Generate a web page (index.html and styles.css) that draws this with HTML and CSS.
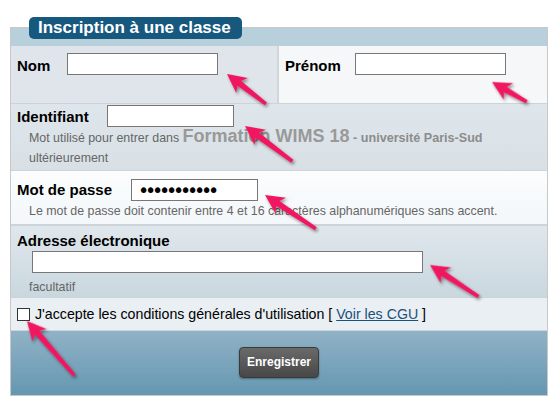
FILE: index.html
```html
<!DOCTYPE html>
<html lang="fr">
<head>
<meta charset="utf-8">
<title>Inscription à une classe</title>
<link rel="stylesheet" href="styles.css">
</head>
<body>
<div class="page">
  <form class="panel">
    <div class="legend">Inscription à une classe</div>
    <div class="strip"></div>

    <div class="row names">
      <div class="cell cell-nom">
        <label class="lab lab-nom">Nom</label>
        <input class="field field-short" type="text">
      </div>
      <div class="cell cell-prenom">
        <label class="lab lab-prenom">Prénom</label>
        <input class="field field-short" type="text">
      </div>
    </div>

    <div class="row ident">
      <div class="line">
        <label class="lab lab-ident">Identifiant</label>
        <input class="field field-mid" type="text">
      </div>
      <div class="help help-ident">Mot utilisé pour entrer dans <span class="site">Formation WIMS 18</span> <span class="univ">- université Paris-Sud</span><br>ultérieurement</div>
    </div>

    <div class="row pass">
      <div class="line">
        <label class="lab lab-pass">Mot de passe</label>
        <input class="field field-mid field-pass" type="password" value="abcdefghijk">
      </div>
      <div class="help help-pass">Le mot de passe doit contenir entre 4 et 16 caractères alphanumériques sans accent.</div>
    </div>

    <div class="row mail">
      <label class="lab lab-mail">Adresse électronique</label>
      <input class="field field-long" type="text">
      <div class="help help-mail">facultatif</div>
    </div>

    <div class="row cgu">
      <input class="check" type="checkbox">
      <span class="cgu-text">J'accepte les conditions générales d'utilisation [ <a class="cgu-link" href="#">Voir les CGU</a> ]</span>
    </div>

    <div class="footer">
      <button class="btn" type="button">Enregistrer</button>
    </div>
  </form>

  <svg class="arrows" width="550" height="408" viewBox="0 0 550 408">
    <defs>
      <filter id="sh" x="-50%" y="-50%" width="200%" height="200%">
        <feDropShadow dx="1.5" dy="2" stdDeviation="1.5" flood-color="#000" flood-opacity="0.45"/>
      </filter>
    </defs>
    <g fill="#f0185e" filter="url(#sh)">
      <polygon transform="translate(227 74) rotate(37.6)" points="0,0 19,-9.5 15.5,-3 49,-1.8 49,1.8 15.5,3 19,9.5"/>
      <polygon transform="translate(492 82) rotate(29.7)" points="0,0 19,-9.5 15.5,-3 40,-1.8 40,1.8 15.5,3 19,9.5"/>
      <polygon transform="translate(245 126) rotate(36.7)" points="0,0 19,-9.5 15.5,-3 59,-1.8 59,1.8 15.5,3 19,9.5"/>
      <polygon transform="translate(265 195) rotate(33.7)" points="0,0 19,-9.5 15.5,-3 61,-1.8 61,1.8 15.5,3 19,9.5"/>
      <polygon transform="translate(430 265) rotate(33.1)" points="0,0 19,-9.5 15.5,-3 58,-1.8 58,1.8 15.5,3 19,9.5"/>
      <polygon transform="translate(27 321) rotate(49)" points="0,0 19,-9.5 15.5,-3 72,-1.8 72,1.8 15.5,3 19,9.5"/>
    </g>
  </svg>
</div>
</body>
</html>
```

FILE: styles.css
```css
* { box-sizing: border-box; }

html, body {
  margin: 0;
  background: #ffffff;
}

body {
  font-family: "Liberation Sans", Arial, sans-serif;
  color: #000;
}

.page {
  position: relative;
  width: 550px;
  height: 408px;
  padding: 27px 0 0 10px;
}

.panel {
  position: relative;
  width: 538px;
  margin: 0;
  border: 1px solid #c8c8c8;
}

.legend {
  position: absolute;
  left: 18px;
  top: -11px;
  width: 213px;
  height: 22px;
  padding-left: 9px;
  background: #17587e;
  border-radius: 5px;
  color: #fff;
  font-weight: bold;
  font-size: 17px;
  line-height: 22px;
  white-space: nowrap;
}

.strip {
  height: 18px;
  background: #b8cfdc;
}

.row {
  border-bottom: 1px solid #cdd4d9;
}

.lab {
  font-weight: bold;
  font-size: 15px;
  line-height: 22px;
}

.field {
  height: 22px;
  margin: 0;
  padding: 0 3px;
  border: 1px solid #777;
  background: #fff;
  font-family: "Liberation Sans", Arial, sans-serif;
  font-size: 13px;
  outline: none;
}

.field-short { width: 151px; }
.field-mid { width: 127px; }
.field-long { width: 391px; }

.field-pass {
  font-family: "DejaVu Sans", sans-serif;
  font-size: 19px;
  letter-spacing: -4.2px;
  padding-left: 6px;
  color: #000;
}

/* Row 1 */
.names {
  display: flex;
  height: 58px;
}

.cell {
  display: flex;
  align-items: flex-start;
  padding-top: 7px;
}

.cell-nom {
  width: 266px;
  padding-left: 6px;
  background: #dfe5ea;
}

.cell-prenom {
  flex: 1;
  padding-left: 6px;
  background: #f5f7f9;
  border-left: 2px solid #d0d6da;
}

.lab-nom { width: 50px; margin-top: 2px; }
.lab-prenom { width: 70px; margin-top: 2px; }

.line {
  display: flex;
  align-items: center;
}

/* Row 2 */
.ident {
  height: 67px;
  padding-left: 6px;
  background: linear-gradient(#dfe6eb, #d8e0e6);
}

.lab-ident { width: 90px; margin-top: 2px; }

.help {
  color: #666;
  font-size: 12.4px;
}

.help-ident {
  margin-left: 12px;
  line-height: 20px;
  margin-top: 0;
}

.site {
  font-weight: bold;
  font-size: 18px;
  line-height: 12px;
  color: #999;
}

.univ {
  font-weight: bold;
  font-size: 12.6px;
  color: #8c8c8c;
}

/* Row 3 */
.pass {
  height: 55px;
  padding: 7px 0 0 6px;
  background: linear-gradient(#fbfdfe, #f3f7f9);
  border-bottom-width: 2px;
}

.lab-pass { width: 114px; margin-top: 1px; }

.help-pass {
  margin: 2px 0 0 12px;
  line-height: 16px;
}

/* Row 4 */
.mail {
  height: 72px;
  padding: 6px 0 0 6px;
  background: linear-gradient(#e0e7ec, #c9d7df);
}

.lab-mail {
  display: block;
  line-height: 18px;
  margin-bottom: 1px;
}

.field-long {
  display: block;
  margin-left: 15px;
}

.help-mail {
  margin: 6px 0 0 12px;
  line-height: 16px;
}

/* Row 5 */
.cgu {
  display: flex;
  align-items: center;
  height: 33px;
  padding-left: 6px;
  background: #e9eff3;
}

.check {
  -webkit-appearance: none;
  appearance: none;
  width: 13px;
  height: 13px;
  margin: 0 5px 0 0;
  border: 1px solid #333;
  background: #fff;
  border-radius: 0;
}

.cgu-text {
  font-size: 14.2px;
  line-height: 18px;
}

.cgu-link {
  color: #1c4f7a;
  text-decoration: underline;
}

/* Footer */
.footer {
  display: flex;
  justify-content: center;
  align-items: center;
  height: 64px;
  background: linear-gradient(#90b2c6, #6597b1);
}

.btn {
  width: 80px;
  height: 31px;
  border: 1px solid #3a3a3a;
  border-radius: 4px;
  background: linear-gradient(#6a6a6a, #474747);
  color: #fff;
  font-family: "Liberation Sans", Arial, sans-serif;
  font-weight: bold;
  font-size: 12px;
  box-shadow: 0 1px 2px rgba(0, 0, 0, 0.35);
  padding: 0;
  margin-top: -2px;
}

.arrows {
  position: absolute;
  left: 0;
  top: 0;
  pointer-events: none;
}
```
